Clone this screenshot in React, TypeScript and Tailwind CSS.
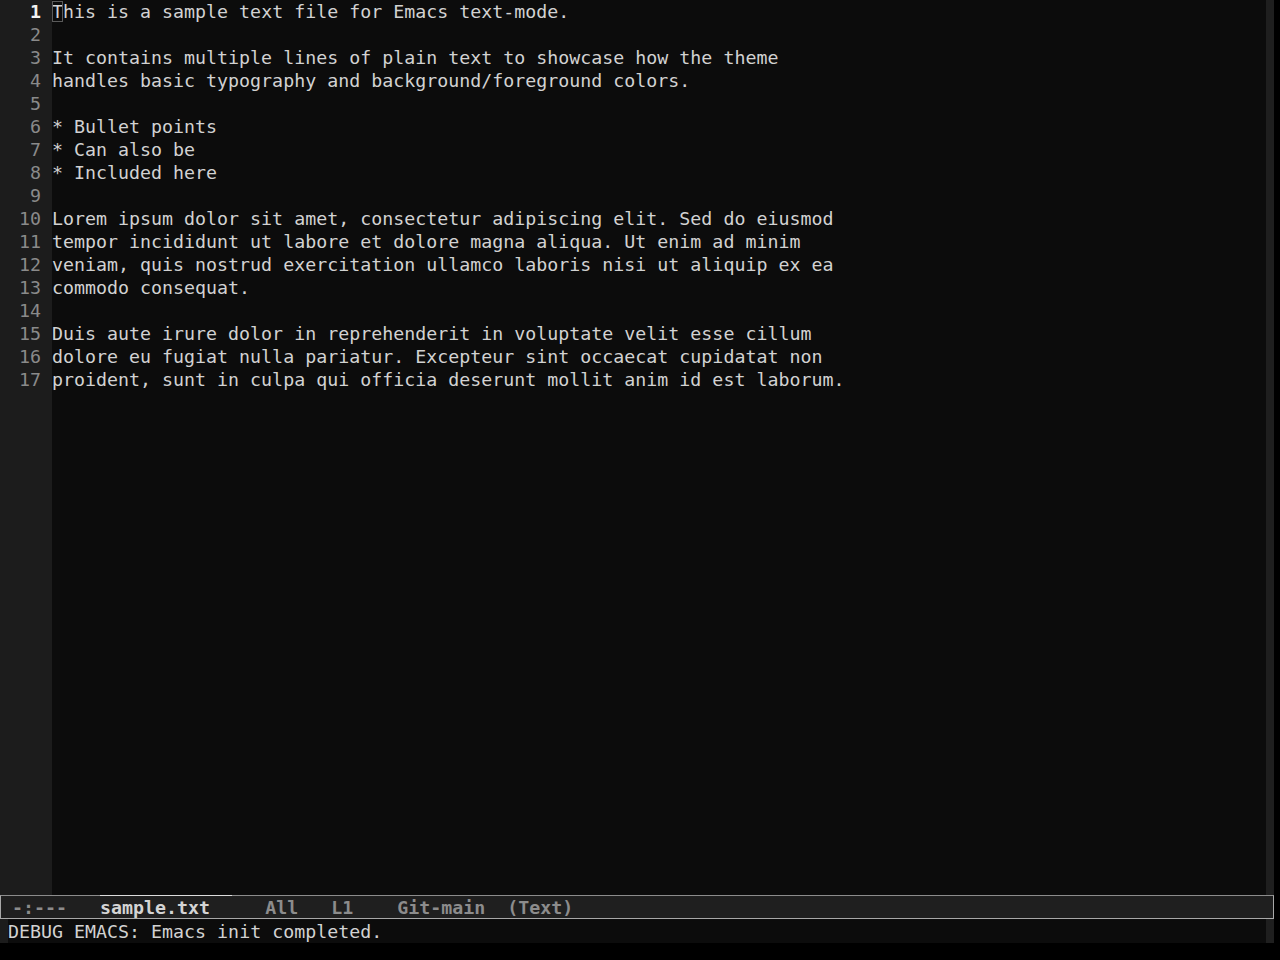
import React from 'react';

const lines: string[] = [
    'This is a sample text file for Emacs text-mode.',
    '',
    'It contains multiple lines of plain text to showcase how the theme',
    'handles basic typography and background/foreground colors.',
    '',
    '* Bullet points',
    '* Can also be',
    '* Included here',
    '',
    'Lorem ipsum dolor sit amet, consectetur adipiscing elit. Sed do eiusmod',
    'tempor incididunt ut labore et dolore magna aliqua. Ut enim ad minim',
    'veniam, quis nostrud exercitation ullamco laboris nisi ut aliquip ex ea',
    'commodo consequat.',
    '',
    'Duis aute irure dolor in reprehenderit in voluptate velit esse cillum',
    'dolore eu fugiat nulla pariatur. Excepteur sint occaecat cupidatat non',
    'proident, sunt in culpa qui officia deserunt mollit anim id est laborum.',
];

const mono = "font-['DejaVu_Sans_Mono',monospace] text-[18.3px] leading-[23px]";

const App: React.FC = () => {
    return (
        <div className={`w-[1280px] h-[960px] bg-black ${mono}`}>
            <div className="w-[1274px] flex flex-col">
                {/* window */}
                <div className="flex h-[895px]">
                    <div className="w-[52px] bg-[#1c1c1c] pr-[11px] text-right text-[#8a8a8a]">
                        {lines.map((_, i) => (
                            <div key={i} className={i === 0 ? 'font-bold text-[#f2f2f2]' : ''}>
                                {i + 1}
                            </div>
                        ))}
                    </div>
                    <div className="flex-1 bg-[#0c0c0c] text-[#d2d2d2] whitespace-pre">
                        {lines.map((line, i) => (
                            <div key={i} className="h-[23px]">
                                {i === 0 ? (
                                    <>
                                        <span className="outline outline-1 -outline-offset-1 outline-[#5a5a5a]">{line[0]}</span>
                                        {line.slice(1)}
                                    </>
                                ) : (
                                    line
                                )}
                            </div>
                        ))}
                    </div>
                    <div className="w-[8px] bg-[#1f1f1f]" />
                </div>

                {/* mode line */}
                <div className="h-[24px] bg-[#1f1f1f] border border-[#a8a8a8] border-t-[#8c8c8c] whitespace-pre font-bold text-[#8c8c8c] leading-[22px] flex">
                    <span className="pt-px">{' -:---   '}</span>
                    <span className="text-[#d4d4d4] -mt-px pt-px border-t border-[#dcdcdc]">{'sample.txt  '}</span>
                    <span className="pt-px">{'   All   L1    Git-main  (Text)'}</span>
                </div>

                {/* echo area */}
                <div className="h-[24px] flex">
                    <div className="w-[8px] bg-[#1c1c1c]" />
                    <div className="flex-1 bg-[#0c0c0c] text-[#d2d2d2] whitespace-pre pt-px">DEBUG EMACS: Emacs init completed.</div>
                    <div className="w-[8px] bg-[#1f1f1f]" />
                </div>
            </div>
        </div>
    );
};

export default App;
